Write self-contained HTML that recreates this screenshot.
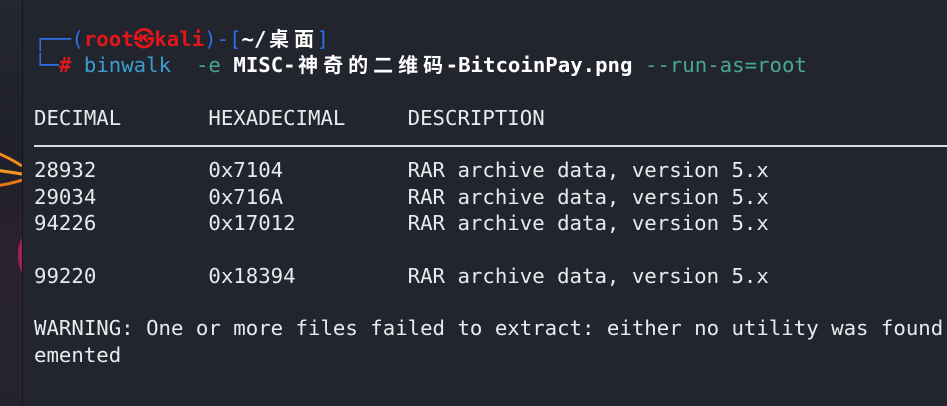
<!DOCTYPE html>
<html><head><meta charset="utf-8"><style>
html,body{margin:0;padding:0;width:947px;height:406px;overflow:hidden;background:#23252e}
.side{position:absolute;left:0;top:0;width:22px;height:406px;background:linear-gradient(#252731,#1f2029 40%,#2a2230 60%,#23232e);overflow:hidden}
.bd{position:absolute;left:22px;top:0;width:1px;height:406px;background:#14151b}
pre{position:absolute;left:34px;top:26px;margin:0;font-family:"DejaVu Sans Mono","Liberation Mono",monospace;font-size:20.7px;line-height:26.3px;color:#e8eaee;white-space:pre}
.w{display:inline-block;width:25px;text-align:center;font-family:"Noto Sans CJK SC",sans-serif;font-size:20px;line-height:20px}
.b{color:#2f6fe6}.r{color:#e0161b;font-weight:bold}.wb{color:#fff;font-weight:bold}
.c{color:#3a9fd0}.g{color:#46a893}
.sep{position:absolute;left:34px;top:145px;width:913px;height:2px;background:#d8dadd}
</style></head><body>
<div class="side">
<svg width="22" height="406" style="position:absolute;left:0;top:0">
<path d="M-5 152 Q10 158 22 166" stroke="#f08a1a" stroke-width="3" fill="none"/>
<path d="M-5 170 Q10 172 22 174" stroke="#f5961e" stroke-width="3" fill="none"/>
<path d="M-5 186 Q10 184 22 180" stroke="#e47a14" stroke-width="3" fill="none"/>
<ellipse cx="24" cy="255" rx="6" ry="18" fill="#a0205c"/>
</svg>
</div>
<div class="bd"></div>
<pre><span class="b">┌──(</span><span class="r">root㉿kali</span><span class="b">)-[</span><span class="wb">~/<span class="w">桌</span><span class="w">面</span></span><span class="b">]</span>
<span class="b">└─</span><span class="r">#</span> <span class="c">binwalk</span>  <span class="g">-e</span> <span class="wb">MISC-<span class="w">神</span><span class="w">奇</span><span class="w">的</span><span class="w">二</span><span class="w">维</span><span class="w">码</span>-BitcoinPay.png</span> <span class="g">--run-as=root</span>

DECIMAL       HEXADECIMAL     DESCRIPTION

28932         0x7104          RAR archive data, version 5.x
29034         0x716A          RAR archive data, version 5.x
94226         0x17012         RAR archive data, version 5.x

99220         0x18394         RAR archive data, version 5.x

WARNING: One or more files failed to extract: either no utility was found
emented</pre>
<div class="sep"></div>
</body></html>
